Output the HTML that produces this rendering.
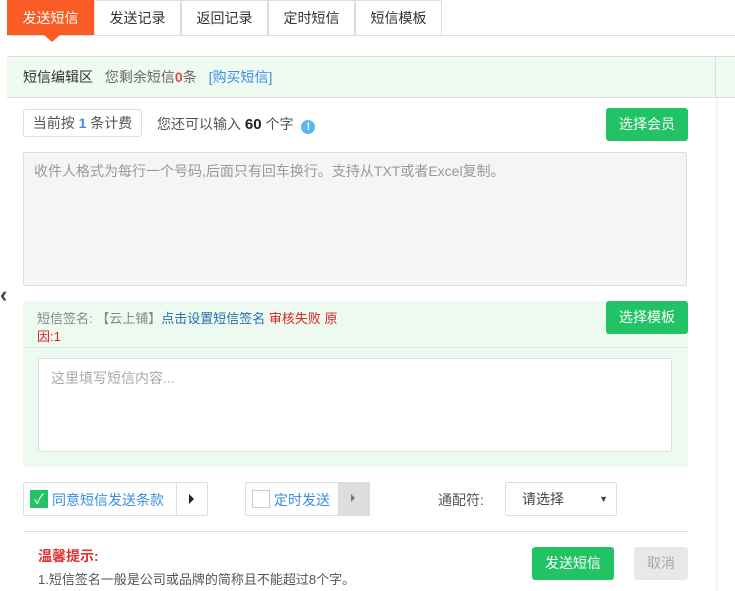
<!DOCTYPE html>
<html><head><meta charset="utf-8"><style>
*{box-sizing:border-box;margin:0;padding:0}
body{width:735px;height:591px;overflow:hidden;background:#fff;font-family:"Liberation Sans","Noto Sans CJK SC",sans-serif;font-size:13px;color:#555;position:relative}
.a{position:absolute}
.tab{position:absolute;top:0;height:35px;width:87px;border:1px solid #ddd;border-bottom:none;text-align:center;line-height:34px;font-size:14px;color:#333;background:#fff}
.btn{position:absolute;background:#22c365;color:#fff;border-radius:3px;text-align:center;font-size:14px}
</style></head><body>
<div class="a" style="left:7px;top:35px;width:728px;height:1px;background:#ddd"></div>
<div class="tab" style="left:7px;background:#f95c25;color:#fff;border-color:#f95c25">发送短信</div>
<div class="a" style="left:44px;top:35px;width:0;height:0;border-left:8px solid transparent;border-right:8px solid transparent;border-top:7px solid #f95c25"></div>
<div class="tab" style="left:94px">发送记录</div>
<div class="tab" style="left:181px">返回记录</div>
<div class="tab" style="left:268px">定时短信</div>
<div class="tab" style="left:355px">短信模板</div>

<div class="a" style="left:7px;top:56px;width:728px;height:42px;background:#effaf1;border-top:1px solid #ddd;border-bottom:1px solid #ddd"></div>
<div class="a" style="left:715px;top:56px;width:1px;height:42px;background:#ddd"></div>
<div class="a" style="left:23px;top:67px;font-size:14px;color:#333">短信编辑区 <span style="color:#666;margin-left:8px">您剩余短信<b style="color:#e74c3c">0</b>条</span> <span style="color:#3a8ee6;margin-left:8px">[购买短信]</span></div>

<div class="a" style="left:716px;top:98px;width:3px;height:493px;background:linear-gradient(90deg,#eee,#fff)"></div>
<div class="a" style="left:0;top:282px;font-size:22px;color:#444;font-weight:bold">‹</div>

<div class="a" style="left:23px;top:109px;width:119px;height:28px;border:1px solid #ddd;border-radius:3px;line-height:26px;text-align:center;color:#555;font-size:14px">当前按 <b style="color:#3a8ee6">1</b> 条计费</div>
<div class="a" style="left:157px;top:114px;color:#555;font-size:14px">您还可以输入 <b style="color:#222;font-size:15px">60</b> 个字 <span style="display:inline-block;width:14px;height:14px;border-radius:50%;background:#5bb7f0;color:#fff;font-size:11px;text-align:center;line-height:14px;font-weight:bold;margin-left:4px;vertical-align:-1px">!</span></div>
<div class="btn" style="left:606px;top:108px;width:82px;height:33px;line-height:33px">选择会员</div>

<div class="a" style="left:23px;top:152px;width:664px;height:134px;background:#f5f5f5;border:1px solid #ddd;border-radius:2px;padding:8px 10px;color:#999;font-size:14px">收件人格式为每行一个号码,后面只有回车换行。支持从TXT或者Excel复制。</div>

<div class="a" style="left:23px;top:301px;width:665px;height:166px;background:#ecfaef"></div>
<div class="a" style="left:23px;top:347px;width:665px;height:1px;background:#d8e8dc"></div>
<div class="a" style="left:37px;top:310px;width:320px;line-height:18px;color:#888">短信签名: 【云上铺】<span style="color:#2a6db0">点击设置短信签名</span> <span style="color:#e02020">审核失败 原因:1</span></div>
<div class="btn" style="left:606px;top:301px;width:82px;height:33px;line-height:33px">选择模板</div>
<div class="a" style="left:38px;top:358px;width:634px;height:94px;background:#fff;border:1px solid #ddd;border-radius:2px;padding:9px 12px;color:#aaa;font-size:14px">这里填写短信内容...</div>

<div class="a" style="left:23px;top:482px;width:185px;height:34px;border:1px solid #ddd;border-radius:2px"></div>
<div class="a" style="left:176px;top:482px;width:1px;height:34px;background:#ddd"></div>
<div class="a" style="left:30px;top:490px;width:18px;height:18px;background:#22c365;color:#fff;font-size:14px;text-align:center;line-height:18px">✓</div>
<div class="a" style="left:52px;top:490px;color:#3a8ee6;font-size:14px">同意短信发送条款</div>
<div class="a" style="left:189px;top:494px;border-top:5px solid transparent;border-bottom:5px solid transparent;border-left:5px solid #222"></div>

<div class="a" style="left:245px;top:482px;width:125px;height:34px;border:1px solid #ddd;border-radius:2px"></div>
<div class="a" style="left:338px;top:482px;width:32px;height:34px;background:#ddd"></div>
<div class="a" style="left:252px;top:490px;width:18px;height:18px;border:1px solid #ccc;background:#fff"></div>
<div class="a" style="left:274px;top:490px;color:#3a8ee6;font-size:14px">定时发送</div>
<div class="a" style="left:351px;top:494px;border-top:4px solid transparent;border-bottom:4px solid transparent;border-left:4px solid #777"></div>

<div class="a" style="left:438px;top:490px;color:#555;font-size:14px">通配符:</div>
<div class="a" style="left:505px;top:482px;width:112px;height:34px;border:1px solid #ddd;border-radius:2px;padding-left:16px;line-height:33px;color:#444;font-size:14px">请选择<span style="position:absolute;right:8px;font-size:9px">▼</span></div>

<div class="a" style="left:23px;top:531px;width:665px;height:1px;background:#ddd"></div>
<div class="a" style="left:38px;top:546px;color:#e03030;font-weight:bold;font-size:14px">温馨提示:</div>
<div class="a" style="left:38px;top:569px;color:#555">1.短信签名一般是公司或品牌的简称且不能超过8个字。</div>
<div class="btn" style="left:532px;top:547px;width:82px;height:33px;line-height:33px">发送短信</div>
<div class="a" style="left:634px;top:547px;width:54px;height:33px;line-height:33px;background:#e8e8e8;color:#aaa;border-radius:3px;text-align:center;font-size:14px">取消</div>
</body></html>
